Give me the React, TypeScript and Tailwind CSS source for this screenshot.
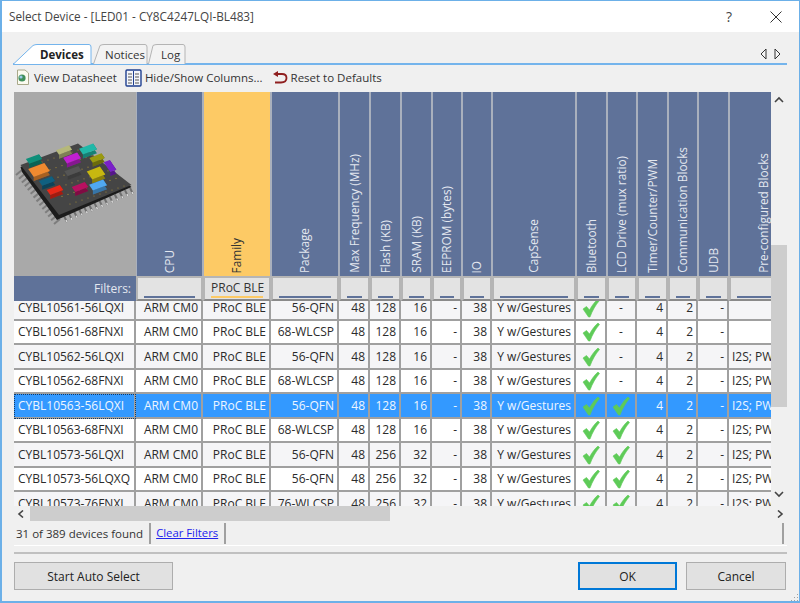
import React from 'react';

const gridCols = 'grid-cols-[122px_67px_68px_68px_31px_31px_31px_30px_30px_84px_31px_30px_31px_30px_31px_70px]';

const headers = [
  'CPU',
  'Family',
  'Package',
  'Max Frequency (MHz)',
  'Flash (KB)',
  'SRAM (KB)',
  'EEPROM (bytes)',
  'IO',
  'CapSense',
  'Bluetooth',
  'LCD Drive (mux ratio)',
  'Timer/Counter/PWM',
  'Communication Blocks',
  'UDB',
  'Pre-configured Blocks',
];

interface Device {
  name: string;
  pkg: string;
  flash: string;
  sram: string;
  lcd: boolean;
  blocks: string;
}

const devices: Device[] = [
  { name: 'CYBL10561-56LQXI', pkg: '56-QFN', flash: '128', sram: '16', lcd: false, blocks: '' },
  { name: 'CYBL10561-68FNXI', pkg: '68-WLCSP', flash: '128', sram: '16', lcd: false, blocks: '' },
  { name: 'CYBL10562-56LQXI', pkg: '56-QFN', flash: '128', sram: '16', lcd: false, blocks: 'I2S; PWM' },
  { name: 'CYBL10562-68FNXI', pkg: '68-WLCSP', flash: '128', sram: '16', lcd: false, blocks: 'I2S; PWM' },
  { name: 'CYBL10563-56LQXI', pkg: '56-QFN', flash: '128', sram: '16', lcd: true, blocks: 'I2S; PWM' },
  { name: 'CYBL10563-68FNXI', pkg: '68-WLCSP', flash: '128', sram: '16', lcd: true, blocks: 'I2S; PWM' },
  { name: 'CYBL10573-56LQXI', pkg: '56-QFN', flash: '256', sram: '32', lcd: true, blocks: 'I2S; PWM' },
  { name: 'CYBL10573-56LQXQ', pkg: '56-QFN', flash: '256', sram: '32', lcd: true, blocks: 'I2S; PWM' },
  { name: 'CYBL10573-76FNXI', pkg: '76-WLCSP', flash: '256', sram: '32', lcd: true, blocks: 'I2S; PWM' },
];

const Check = () => (
  <svg width="18" height="20" viewBox="0 0 18 20" className="block">
    <path
      d="M1 11 L4.5 8.5 L7.5 12 C10 7.5 12.5 4 16 1 L17.5 2.5 C13.5 7 10.5 12.5 8 19 L6.5 19 Z"
      fill="#5ecb58"
      stroke="#5ecb58"
      strokeWidth="0.6"
      strokeLinejoin="round"
    />
  </svg>
);

const blocks = [
  [34, 161, 6.5, 3, '#0f8f7a'],
  [64, 152, 6.5, 2.8, '#b5b87a'],
  [88, 151, 7, 3.5, '#20b8a8'],
  [72, 160, 7, 3.5, '#c020d0'],
  [97, 160, 6, 3, '#9a9a10'],
  [110, 168, 3, 6, '#7a20c8'],
  [39, 172, 8, 5, '#f08a30'],
  [47, 183, 6.5, 3, '#106080'],
  [73, 173, 7, 3, '#555555'],
  [96, 175, 6.5, 5, '#c8b810'],
  [55, 192, 6.5, 3.2, '#e82818'],
  [80, 189, 6.5, 3.2, '#b81060'],
  [98, 187, 7, 3.5, '#50a8f0'],
] as const;

const ChipBlock = ({ b }: { b: readonly [number, number, number, number, string] }) => {
  const [cx, cy, a, c, fill] = b;
  const pt = (u: number, v: number, d = 0) => `${cx + u * a + v * c * 0.55},${cy - u * a * 0.38 + v * c * 0.8 + d}`;
  const top = [pt(-1, -1, -2), pt(1, -1, -2), pt(1, 1, -2), pt(-1, 1, -2)].join(' ');
  const side = [pt(-1, 1, -2), pt(1, 1, -2), pt(1, -1, -2), pt(1, -1, 2), pt(1, 1, 2), pt(-1, 1, 2)].join(' ');
  return (
    <g>
      <polygon points={side} fill={fill} />
      <polygon points={side} fill="#000000" fillOpacity="0.3" />
      <polygon points={top} fill={fill} />
    </g>
  );
};

const Chip = () => {
  const pins = Array.from({ length: 14 }, (_, i) => i);
  return (
    <svg width="121" height="184" viewBox="14 92 121 184" className="block">
      {pins.map((i) => {
        const x = 22 + (i * 38) / 13;
        const y = 170 + (i * 49) / 13;
        return <line key={i} x1={x} y1={y} x2={x - 6} y2={y + 5} stroke="#7d7d7d" strokeWidth="2" />;
      })}
      {pins.map((i) => {
        const x = 64 + (i * 66) / 13;
        const y = 216 - (i * 28) / 13;
        return (
          <g key={i}>
            <line x1={x} y1={y} x2={x + 3} y2={y + 6} stroke="#6f6f6f" strokeWidth="2" />
            <line x1={x + 2} y1={y + 4} x2={x + 3} y2={y + 6} stroke="#dcdcdc" strokeWidth="1.4" />
          </g>
        );
      })}
      <polygon points="20.5,167 78,145 131.5,187 59,219 57,220 22,172" fill="#1c1c1c" />
      <polygon points="20.5,165 78,143.5 131.5,185 59,215" fill="#454545" />
      {Array.from({ length: 60 }, (_, i) => {
        const u = (i % 10) / 9;
        const v = Math.floor(i / 10) / 5;
        return <circle key={i} cx={30 + u * 54 + v * 40} cy={166 - u * 18 + v * 38} r="0.6" fill="#a38a3a" />;
      })}
      {blocks.map((b, i) => (
        <ChipBlock key={i} b={b} />
      ))}
    </svg>
  );
};

const HeaderCell = ({ label }: { label: string }) => {
  const active = label === 'Family';
  return (
    <div className={`flex h-[184px] items-end justify-center border-r border-l border-[#a9b0bd] pb-[3px] text-[11.8px] ${active ? 'bg-[#fdca65] text-[#333333]' : 'bg-[#5f7299] text-[#e4e8f0]'}`}>
      <span className="rotate-180 whitespace-nowrap [writing-mode:vertical-rl]">{label}</span>
    </div>
  );
};

const FilterCell = ({ value, active }: { value?: string; active?: boolean }) => (
  <div className="flex h-[25px] flex-col items-stretch border-2 border-[#b5b5b5] border-b-[#8a8a8a] bg-[#e3e3e3] px-[6px] pt-[2px]">
    <span className="h-[16px] whitespace-nowrap text-center text-[12px] leading-[16px] text-[#333333]">{value}</span>
    <span className={`h-[2px] ${active ? 'bg-[#fdca65]' : 'bg-[#5f7299]'}`} />
  </div>
);

const DeviceRow = ({ d, index }: { d: Device; index: number }) => {
  const selected = index === 4;
  const shaded = index % 2 === 0 && !selected;
  const text = selected ? 'text-[#eef6ff]' : 'text-[#2b2b2b]';
  const base = `flex items-center overflow-hidden whitespace-nowrap border-r-2 border-[#a0a0a0] border-b-2 pt-[1px] ${shaded ? 'bg-[#f5f5f7]' : selected ? 'bg-[#3399ff]' : 'bg-white'} ${text}`;
  const center = `${base} justify-center`;
  const right = `${base} justify-end pr-[3px]`;
  return (
    <div className={`grid h-[24.5px] shrink-0 text-[12px] ${gridCols}`}>
      <div className={`${base} pl-[4px] ${selected ? 'outline-1 -outline-offset-1 outline-dotted outline-[#123a66]' : ''}`}>{d.name}</div>
      <div className={right}>ARM CM0</div>
      <div className={right}>PRoC BLE</div>
      <div className={right}>{d.pkg}</div>
      <div className={right}>48</div>
      <div className={right}>{d.flash}</div>
      <div className={right}>{d.sram}</div>
      <div className={right}>-</div>
      <div className={right}>38</div>
      <div className={right}>Y w/Gestures</div>
      <div className={center}><Check /></div>
      <div className={center}>{d.lcd ? <Check /> : '-'}</div>
      <div className={right}>4</div>
      <div className={right}>2</div>
      <div className={right}>-</div>
      <div className={`${base} pl-[3px]`}>{d.blocks}</div>
    </div>
  );
};

const Arrow = ({ dir }: { dir: 'up' | 'down' | 'left' | 'right' }) => {
  const paths = { up: 'M1 6 L5 2 L9 6', down: 'M1 2 L5 6 L9 2', left: 'M6 0.5 L2 4 L6 7.5', right: 'M3 0.5 L7 4 L3 7.5' };
  return (
    <svg width="10" height="8" viewBox="0 0 10 8" className="block">
      <path d={paths[dir]} fill="none" stroke="#444444" strokeWidth="1.6" />
    </svg>
  );
};

const DatasheetIcon = () => (
  <svg width="14" height="17" viewBox="0 0 14 17" className="block">
    <path d="M1.5 1 H9 L12.5 4 V15.5 H1.5 Z" fill="#fbfbf0" stroke="#a9a98a" />
    <circle cx="6" cy="9" r="3.6" fill="#3f8f5a" />
    <circle cx="5" cy="8" r="1.6" fill="#9ac8e8" />
  </svg>
);

const ColumnsIcon = () => (
  <svg width="17" height="18" viewBox="0 0 17 18" className="block">
    <rect x="1" y="1" width="15" height="16" rx="1" fill="#f4f6fb" stroke="#1f3f8f" strokeWidth="1.4" />
    <path d="M3 5 H7 M3 8 H7 M3 11 H7 M3 14 H7 M10 5 H14 M10 8 H14 M10 11 H14 M10 14 H14" stroke="#555555" strokeWidth="1.2" />
    <path d="M8.5 2 V16" stroke="#1f3f8f" />
  </svg>
);

const ResetIcon = () => (
  <svg width="16" height="14" viewBox="0 0 16 14" className="block">
    <path d="M5 3 H10 C13 3 14.5 5 14.5 7 C14.5 10 12 11.5 9 11.5 H3" fill="none" stroke="#8f1f1f" strokeWidth="1.8" />
    <path d="M6 0 L1 3 L6 6 Z" fill="#8f1f1f" />
  </svg>
);

const Tab = ({ label, active, slant, width, gap, pad }: { label: string; active?: boolean; slant: number; width: number; gap: number; pad: number }) => (
  <div className={`relative flex h-[19px] items-center pt-[3px] ${active ? 'z-10 font-bold text-[#222222]' : 'text-[#333333]'}`} style={{ width, marginLeft: gap }}>
    <svg width={width} height="20" viewBox={`0 0 ${width} 20`} className="absolute top-0 left-0">
      <path
        d={`M0.5 20 L${slant - 2} 1.5 Q${slant} 0.5 ${slant + 2} 0.5 H${width - 3} Q${width - 1} 0.5 ${width - 1} 3 V20`}
        fill={active ? '#ffffff' : '#f3f3f3'}
        stroke={active ? '#74b4ec' : '#b4b4b4'}
      />
    </svg>
    <span className="relative" style={{ marginLeft: pad }}>{label}</span>
  </div>
);

const DialogButton = ({ label, primary, className }: { label: string; primary?: boolean; className: string }) => (
  <button className={`h-[28px] bg-[#e1e1e1] pt-[1px] text-[12px] text-[#222222] ${primary ? 'border-2 border-[#0078d7]' : 'border border-[#adadad]'} ${className}`}>
    {label}
  </button>
);

export default function App() {
  return (
    <div className="relative flex h-[603px] w-[800px] flex-col overflow-hidden border-2 border-t-1 border-r-1 border-[#6cb0e8] bg-[#f0f0f0] font-['Open_Sans','Noto_Sans',sans-serif] text-[11.5px] text-[#2b2b2b]">
      <div className="flex h-[31px] shrink-0 items-center bg-white pl-[7px] text-[11.75px] text-[#444444]">
        <span>Select Device - [LED01 - CY8C4247LQI-BL483]</span>
        <span className="ml-auto mr-[38px] text-[14px]">?</span>
        <svg width="12" height="12" viewBox="0 0 12 12" className="mr-[17px] block">
          <path d="M0.5 0.5 L11.5 11.5 M11.5 0.5 L0.5 11.5" stroke="#333333" />
        </svg>
      </div>

      <div className="flex min-h-0 flex-1 flex-col">
        <div className="ml-[11px] mr-[12px] mt-[14px] flex h-[19px] shrink-0 items-end border-b-2 border-[#74b4ec]">
          <Tab label="Devices" active slant={22} width={79} gap={0} pad={27} />
          <Tab label="Notices" slant={9} width={55} gap={1} pad={12} />
          <Tab label="Log" slant={7} width={38} gap={0} pad={13} />
          <div className="ml-auto mb-[3px] mr-[6px] flex items-center gap-[7px]">
            <svg width="7" height="12" viewBox="0 0 7 12" className="block"><path d="M6 1 L1 6 L6 11 Z" fill="#f4f4f4" stroke="#333333" /></svg>
            <svg width="7" height="12" viewBox="0 0 7 12" className="block"><path d="M1 1 L6 6 L1 11 Z" fill="#f4f4f4" stroke="#333333" /></svg>
          </div>
        </div>

        <div className="ml-[14px] flex h-[25px] shrink-0 items-center text-[#333333]">
          <DatasheetIcon />
          <span className="ml-[4px]">View Datasheet</span>
          <span className="ml-[8px]"><ColumnsIcon /></span>
          <span className="ml-[3px]">Hide/Show Columns...</span>
          <span className="ml-[9px]"><ResetIcon /></span>
          <span className="ml-[3px]">Reset to Defaults</span>
        </div>

        <div className="flex h-[416px] shrink-0 flex-col">
          <div className="flex min-h-0 flex-1 pt-[2px]">
            <div className="ml-[12px] w-[757px] overflow-hidden bg-white">
              <div className={`grid w-[785px] ${gridCols}`}>
                <div className="flex h-[184px] items-start bg-[#a9a9a9]"><Chip /></div>
                {headers.map((h) => (
                  <HeaderCell key={h} label={h} />
                ))}
              </div>
              <div className={`relative z-10 grid w-[785px] ${gridCols} h-[25px] bg-[#a0a0a0]`}>
                <div className="flex h-[25px] items-center justify-end bg-[#5f7299] pr-[5px] text-[12px] text-[#e4e8f0]">Filters:</div>
                <FilterCell />
                <FilterCell value="PRoC BLE" active />
                {headers.slice(2).map((h) => (
                  <FilterCell key={h} />
                ))}
              </div>
              <div className="-mt-[5px] flex h-[240px] w-[785px] flex-col">
                {devices.map((d, i) => (
                  <DeviceRow key={d.name} d={d} index={i} />
                ))}
              </div>
            </div>
            <div className="flex w-[16px] flex-col items-center pt-[4px]">
              <Arrow dir="up" />
              <div className="mt-[141px] h-[162px] w-[16px] bg-[#cdcdcd]" />
              <div className="mt-[83px]"><Arrow dir="down" /></div>
            </div>
          </div>
        </div>

        <div className="ml-[12px] mr-[12px] flex h-[15px] shrink-0 items-center">
          <div className="flex w-[16px] justify-center"><Arrow dir="left" /></div>
          <div className="h-[15px] w-[360px] bg-[#cdcdcd]" />
          <div className="ml-auto mr-[2px]"><Arrow dir="right" /></div>
        </div>

        <div className="ml-[12px] mr-[12px] mt-[1px] flex h-[24px] shrink-0 items-center border-b border-white text-[#333333]">
          <span className="ml-[2px]">31 of 389 devices found</span>
          <span className="ml-[6px] h-[21px] w-[2px] bg-[#a0a0a0]" />
          <a className="ml-[5px] text-[11.3px] text-[#2222ee] underline">Clear Filters</a>
          <span className="ml-[6px] h-[21px] w-[2px] bg-[#a0a0a0]" />
          <span className="ml-auto mr-[3px] h-[21px] w-[2px] bg-[#a0a0a0]" />
        </div>

        <div className="ml-[12px] mr-[12px] mt-[6px] h-[2px] shrink-0 bg-[#c0c0c0]" />

        <div className="ml-[12px] mr-[13px] mt-[8px] flex shrink-0 items-center">
          <DialogButton label="Start Auto Select" className="w-[159px]" />
          <DialogButton label="OK" primary className="ml-auto w-[99px]" />
          <DialogButton label="Cancel" className="ml-[9px] w-[100px]" />
        </div>
      </div>

      <svg width="8" height="8" viewBox="0 0 8 8" className="absolute right-0 bottom-0 block">
        <path d="M6 1 H7 V2 H6 Z M3 4 H4 V5 H3 Z M6 4 H7 V5 H6 Z M0 7 H1 V8 H0 Z M3 7 H4 V8 H3 Z M6 7 H7 V8 H6 Z" fill="#a0a0a0" />
      </svg>
    </div>
  );
}
